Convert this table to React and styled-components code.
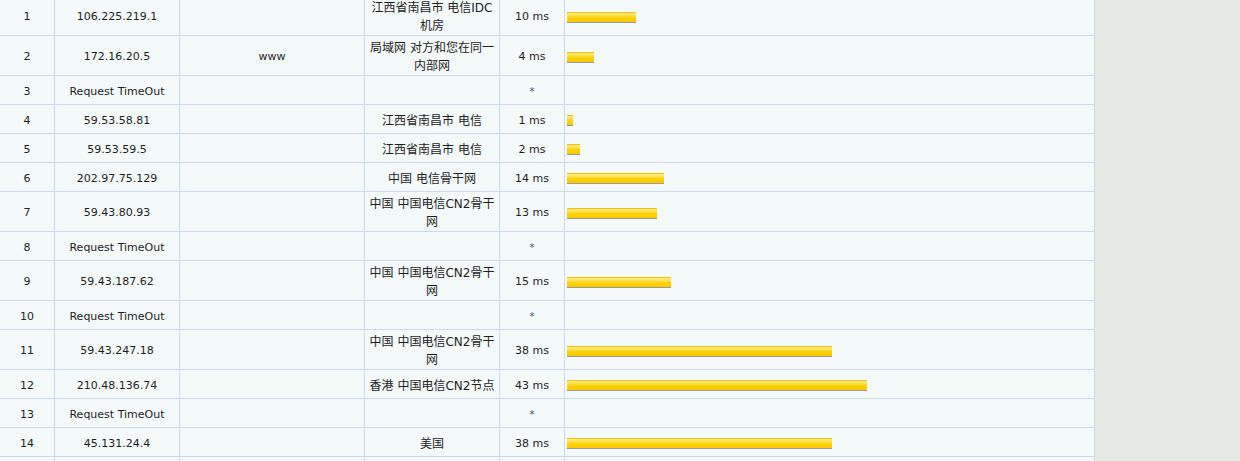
import styled, { createGlobalStyle } from 'styled-components';

const GlobalStyle = createGlobalStyle`
  html, body {
    margin: 0;
    padding: 0;
    background: #e5e9e3;
    overflow: hidden;
  }
`;

const Page = styled.div`
  width: 1095px;
  margin-top: -4px;
  background: #f4f9fa;
`;

const Table = styled.table`
  width: 1095px;
  table-layout: fixed;
  border-collapse: separate;
  border-spacing: 0;
  font-family: "DejaVu Sans", "Noto Sans CJK SC", sans-serif;
  font-size: 11px;
  color: #1e1e1e;
`;

const Col = styled.col`
  width: ${(p) => p.$w}px;
`;

const Row = styled.tr`
  height: 29px;
`;

const Cell = styled.td`
  border-right: 1px solid #cbd8ee;
  border-bottom: 1px solid #cbd8ee;
  padding: 3px 4px 0;
  line-height: 18px;
  text-align: center;
  vertical-align: middle;
  font-size: ${(p) => (p.$cjk ? '12px' : '11px')};
  color: ${(p) => (p.$muted ? '#4a5a8a' : '#1e1e1e')};
  overflow: hidden;
`;

const BarCell = styled(Cell)`
  text-align: left;
  padding-left: 2px;
`;

const Bar = styled.div`
  height: 9px;
  border-top: 1px solid #f2c200;
  border-bottom: 1px solid #9a9a9a;
  background: linear-gradient(#ffea8c 0%, #ffe25a 25%, #ffd000 55%, #ffc800 100%);
`;

const columns = [55, 125, 185, 135, 65, 530];

const hops = [
  { n: 1, ip: '106.225.219.1', host: '', loc: '江西省南昌市 电信IDC机房', ms: 10 },
  { n: 2, ip: '172.16.20.5', host: 'www', loc: '局域网 对方和您在同一内部网', ms: 4 },
  { n: 3, timeout: true },
  { n: 4, ip: '59.53.58.81', host: '', loc: '江西省南昌市 电信', ms: 1 },
  { n: 5, ip: '59.53.59.5', host: '', loc: '江西省南昌市 电信', ms: 2 },
  { n: 6, ip: '202.97.75.129', host: '', loc: '中国 电信骨干网', ms: 14 },
  { n: 7, ip: '59.43.80.93', host: '', loc: '中国 中国电信CN2骨干网', ms: 13 },
  { n: 8, timeout: true },
  { n: 9, ip: '59.43.187.62', host: '', loc: '中国 中国电信CN2骨干网', ms: 15 },
  { n: 10, timeout: true },
  { n: 11, ip: '59.43.247.18', host: '', loc: '中国 中国电信CN2骨干网', ms: 38 },
  { n: 12, ip: '210.48.136.74', host: '', loc: '香港 中国电信CN2节点', ms: 43 },
  { n: 13, timeout: true },
  { n: 14, ip: '45.131.24.4', host: '', loc: '美国', ms: 38 },
];

const App = () => {
  return (
    <Page>
      <GlobalStyle />
      <Table>
        <colgroup>
          {columns.map((w, i) => (
            <Col key={i} $w={w} />
          ))}
        </colgroup>
        <tbody>
          {hops.map((h) => (
            <Row key={h.n}>
              <Cell>{h.n}</Cell>
              <Cell>{h.timeout ? 'Request TimeOut' : h.ip}</Cell>
              <Cell>{h.host}</Cell>
              <Cell $cjk>{h.loc}</Cell>
              <Cell $muted={h.timeout}>{h.timeout ? '*' : `${h.ms} ms`}</Cell>
              <BarCell>
                {!h.timeout && <Bar style={{ width: h.ms * 7 - 1 }} />}
              </BarCell>
            </Row>
          ))}
          <Row>
            <Cell />
            <Cell />
            <Cell />
            <Cell $cjk />
            <Cell />
            <BarCell />
          </Row>
        </tbody>
      </Table>
    </Page>
  );
};

export default App;
